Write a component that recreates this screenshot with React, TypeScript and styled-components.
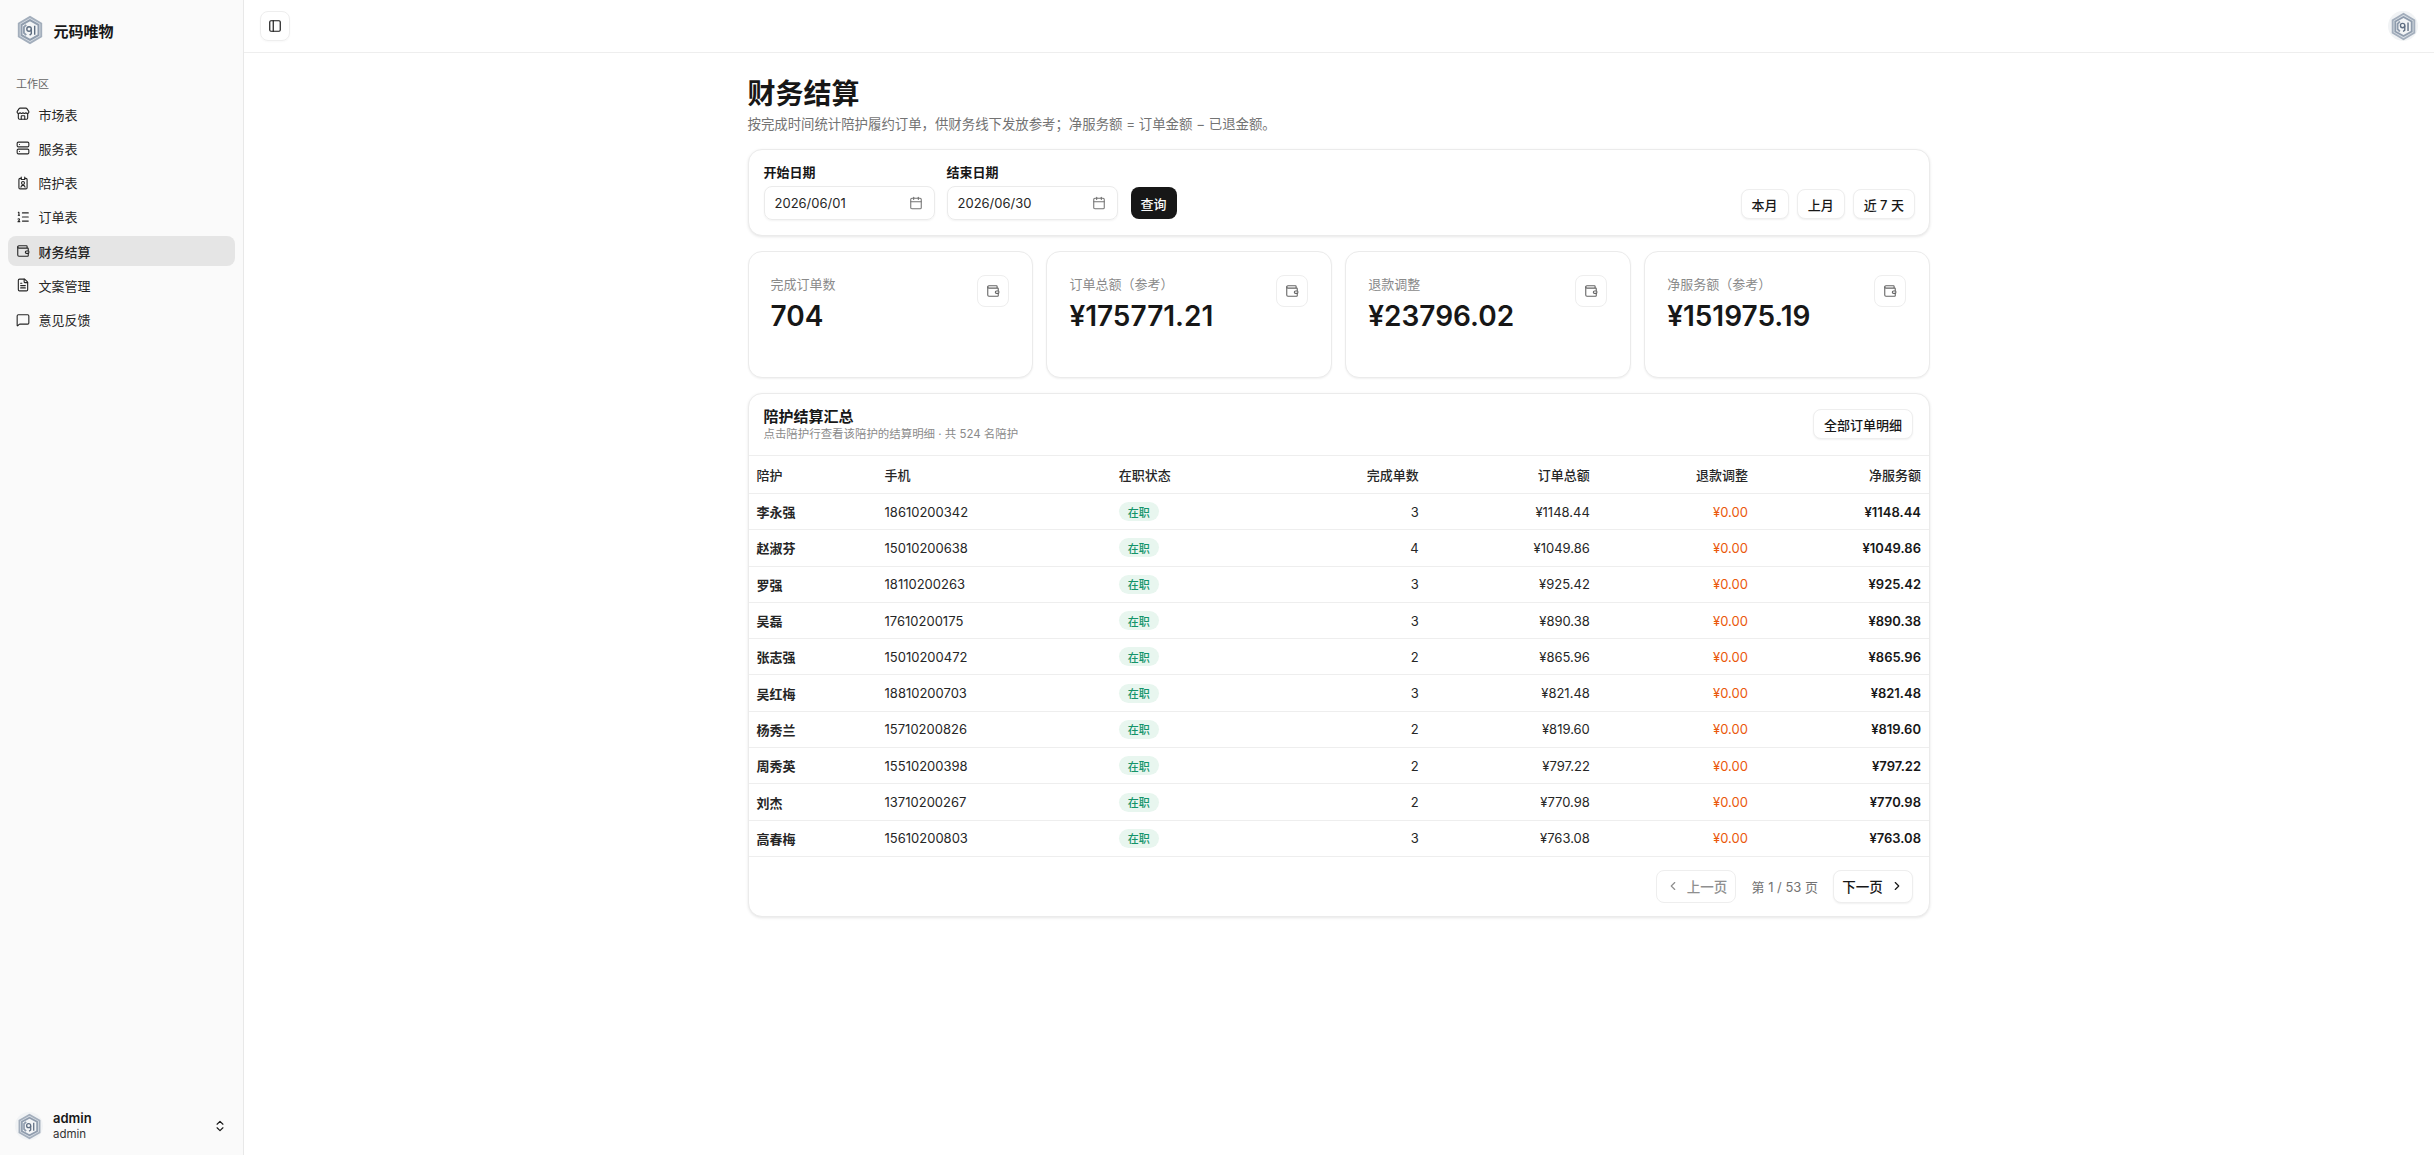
import React from 'react';
import styled, { createGlobalStyle } from 'styled-components';
import {
  Calendar,
  ChevronLeft,
  ChevronRight,
  ChevronsUpDown,
  FileText,
  ListOrdered,
  MessageSquare,
  PanelLeft,
  Server,
  Store,
  Wallet,
} from 'lucide-react';

const GlobalStyle = createGlobalStyle`
  html, body, #root { margin: 0; padding: 0; height: 100%; }
  body {
    background: #fff;
    color: #171717;
    font-family: Inter, "Noto Sans CJK SC", sans-serif;
    -webkit-font-smoothing: antialiased;
  }
  * { box-sizing: border-box; }
`;

const Layout = styled.div`
  display: flex;
  height: 1155px;
  overflow: hidden;
`;

const Sidebar = styled.aside`
  width: 244px;
  flex: none;
  display: flex;
  flex-direction: column;
  background: #fafafa;
  border-right: 1px solid #e8e8e8;
`;

const Brand = styled.div`
  height: 60px;
  display: flex;
  align-items: center;
  gap: 8.5px;
  padding: 0 0 0 15px;
  font-size: 15px;
  font-weight: 600;
`;

const GroupLabel = styled.div`
  margin: 14px 0 0 16px;
  height: 20px;
  line-height: 20px;
  font-size: 11px;
  color: #666;
`;

const Nav = styled.nav`
  display: flex;
  flex-direction: column;
  gap: 4.3px;
  padding: 0 8px;
  margin-top: 5px;
`;

const NavItem = styled.div<{ $active?: boolean }>`
  height: 30px;
  display: flex;
  align-items: center;
  gap: 8.5px;
  padding-left: 8px;
  border-radius: 8px;
  font-size: 13px;
  color: #262626;
  background: ${(p) => (p.$active ? '#e5e5e5' : 'transparent')};
  font-weight: ${(p) => (p.$active ? 500 : 400)};

  svg { width: 14px; height: 14px; flex: none; stroke-width: 1.9; }
`;

const UserRow = styled.div`
  margin-top: auto;
  height: 60px;
  display: flex;
  align-items: center;
  padding: 2px 16px 0 15px;
  gap: 10px;
`;

const UserAvatar = styled.div<{ $size: number }>`
  width: ${(p) => p.$size}px;
  height: ${(p) => p.$size}px;
  flex: none;
  border-radius: 50%;
  background: #f1f3f5;
  display: flex;
  align-items: center;
  justify-content: center;
`;

const UserText = styled.div`
  flex: 1;
  display: flex;
  flex-direction: column;
  font-size: 13px;
  line-height: 16px;
  font-weight: 600;

  span { font-size: 11.5px; font-weight: 400; color: #333; }
`;

const Main = styled.div`
  flex: 1;
  display: flex;
  flex-direction: column;
  min-width: 0;
`;

const Topbar = styled.header`
  height: 53px;
  flex: none;
  display: flex;
  align-items: center;
  justify-content: space-between;
  padding: 0 16px;
  border-bottom: 1px solid #eee;
`;

const IconButton = styled.div`
  width: 30px;
  height: 30px;
  display: flex;
  align-items: center;
  justify-content: center;
  border: 1px solid #eee;
  border-radius: 8px;
  box-shadow: 0 1px 2px rgba(0, 0, 0, 0.03);

  svg { width: 14px; height: 14px; stroke-width: 2; }
`;

const Content = styled.main`
  width: 1182.5px;
  margin: 0 0 0 503.5px;
  padding-top: 20px;
`;

const Title = styled.h1`
  margin: 0;
  font-size: 28px;
  line-height: 42px;
  font-weight: 700;
  letter-spacing: 0;
`;

const Subtitle = styled.p`
  margin: 0;
  font-size: 13.4px;
  line-height: 18px;
  color: #737373;
`;

const Card = styled.section`
  background: #fff;
  border: 1px solid #ebebeb;
  border-radius: 14px;
  box-shadow: 0 1px 3px rgba(0, 0, 0, 0.1);
`;

const FilterCard = styled(Card)`
  margin-top: 16px;
  height: 87px;
  padding: 14px 15px 15px;
  display: flex;
  align-items: flex-end;
  justify-content: space-between;
`;

const FilterFields = styled.div`
  display: flex;
  align-items: flex-end;
  gap: 12px;
`;

const Field = styled.label`
  display: flex;
  flex-direction: column;
  gap: 5px;
  font-size: 13px;
  line-height: 18px;
  font-weight: 600;
`;

const DateInput = styled.div`
  width: 171px;
  height: 34px;
  display: flex;
  align-items: center;
  justify-content: space-between;
  padding: 0 11px 0 10px;
  border: 1px solid #ebebeb;
  border-radius: 8px;
  box-shadow: 0 1px 2px rgba(0, 0, 0, 0.05);
  font-size: 13px;
  font-weight: 400;
  color: #262626;

  svg { width: 14px; height: 14px; color: #737373; stroke-width: 1.8; }
`;

const SearchButton = styled.div`
  width: 46px;
  height: 32px;
  margin: 0 0 1px 1px;
  display: flex;
  align-items: center;
  justify-content: center;
  background: #171717;
  color: #fafafa;
  border-radius: 8px;
  font-size: 13px;
  font-weight: 500;
`;

const QuickRange = styled.div`
  display: flex;
  gap: 8px;
  margin: 0 -1px 1px 0;
`;

const Button = styled.div<{ $disabled?: boolean }>`
  height: 30px;
  display: inline-flex;
  align-items: center;
  justify-content: center;
  gap: 8px;
  padding: 0 10px;
  background: #fff;
  border: 1px solid #eee;
  border-radius: 8px;
  box-shadow: ${(p) => (p.$disabled ? 'none' : '0 1px 2px rgba(0, 0, 0, 0.06)')};
  font-size: 13px;
  font-weight: 500;
  color: ${(p) => (p.$disabled ? '#8f8f8f' : '#171717')};
  white-space: nowrap;

  svg { width: 14px; height: 14px; }
`;

const Stats = styled.div`
  display: grid;
  grid-template-columns: repeat(4, 1fr);
  gap: 13px;
  margin-top: 15px;
`;

const StatCard = styled(Card)`
  height: 127px;
  display: flex;
  align-items: flex-start;
  justify-content: space-between;
  padding: 22px 23px 0 22px;
  box-shadow: 0 1px 2px rgba(0, 0, 0, 0.06);
`;

const StatLabel = styled.div`
  font-size: 13px;
  line-height: 20px;
  color: #8a8a8a;
`;

const StatValue = styled.div`
  margin-top: 3px;
  font-size: 28px;
  line-height: 38px;
  font-weight: 600;
  color: #171717;
`;

const StatIcon = styled.div`
  width: 32px;
  height: 32px;
  margin-top: 1px;
  display: flex;
  align-items: center;
  justify-content: center;
  border: 1px solid #eee;
  border-radius: 8px;
  color: #666;

  svg { width: 14px; height: 14px; stroke-width: 1.9; }
`;

const TableCard = styled(Card)`
  margin-top: 15px;
  height: 524px;
  display: flex;
  flex-direction: column;
`;

const TableHeader = styled.div`
  height: 61px;
  flex: none;
  display: flex;
  align-items: center;
  justify-content: space-between;
  padding: 0 16px 1px 15px;
`;

const TableTitle = styled.div`
  font-size: 15px;
  line-height: 21px;
  font-weight: 600;
`;

const TableHint = styled.div`
  font-size: 11.45px;
  line-height: 15px;
  color: #8a8a8a;
`;

const Table = styled.table`
  width: 100%;
  table-layout: fixed;
  border-collapse: collapse;
  font-size: 13px;
`;

const Th = styled.th<{ $right?: boolean }>`
  height: 38px;
  padding: 0 8px;
  border-top: 1px solid #eee;
  border-bottom: 1px solid #eee;
  text-align: ${(p) => (p.$right ? 'right' : 'left')};
  font-weight: 500;
  color: #262626;
`;

const Td = styled.td<{ $right?: boolean; $bold?: boolean; $tone?: string }>`
  height: 36.3px;
  padding: 0 8px;
  border-bottom: 1px solid #eee;
  text-align: ${(p) => (p.$right ? 'right' : 'left')};
  font-weight: ${(p) => (p.$bold ? 600 : 400)};
  color: ${(p) => p.$tone || '#262626'};
`;

const Badge = styled.span`
  display: inline-flex;
  align-items: center;
  justify-content: center;
  width: 40px;
  height: 19px;
  border-radius: 999px;
  background: #e8f6ef;
  color: #14946a;
  font-size: 11px;
  font-weight: 500;
  vertical-align: middle;
`;

const Pager = styled.div`
  flex: 1;
  display: flex;
  align-items: center;
  justify-content: flex-end;
  gap: 15px;
  padding: 0 16px 0 0;
`;

const PagerButton = styled(Button)`
  height: 33px;
  width: 80px;
  padding: 0;
  gap: 7px;
  font-size: 13.5px;
`;

const PagerText = styled.span`
  font-size: 13px;
  color: #737373;
`;

const widths = [128, 234, 200, 116, 171, 158, 173];

const rows = [
  ['李永强', '18610200342', 3, '¥1148.44'],
  ['赵淑芬', '15010200638', 4, '¥1049.86'],
  ['罗强', '18110200263', 3, '¥925.42'],
  ['吴磊', '17610200175', 3, '¥890.38'],
  ['张志强', '15010200472', 2, '¥865.96'],
  ['吴红梅', '18810200703', 3, '¥821.48'],
  ['杨秀兰', '15710200826', 2, '¥819.60'],
  ['周秀英', '15510200398', 2, '¥797.22'],
  ['刘杰', '13710200267', 2, '¥770.98'],
  ['高春梅', '15610200803', 3, '¥763.08'],
];

const stats = [
  ['完成订单数', '704'],
  ['订单总额（参考）', '¥175771.21'],
  ['退款调整', '¥23796.02'],
  ['净服务额（参考）', '¥151975.19'],
];

// id badge with a clip on top, the one lucide has is horizontal
function StaffBadge() {
  return (
    <svg viewBox="0 0 24 24" fill="none" stroke="currentColor" strokeLinecap="round" strokeLinejoin="round">
      <path d="M9 4H7a2 2 0 0 0-2 2v14a2 2 0 0 0 2 2h10a2 2 0 0 0 2-2V6a2 2 0 0 0-2-2h-2" />
      <path d="M9 2v4h6V2" />
      <circle cx="12" cy="12" r="2.5" />
      <path d="M8.500 19c.4-2 1.700-3 3.500-3s3.100 1 3.500 3" />
    </svg>
  );
}

const navItems = [
  { label: '市场表', icon: <Store /> },
  { label: '服务表', icon: <Server /> },
  { label: '陪护表', icon: <StaffBadge /> },
  { label: '订单表', icon: <ListOrdered /> },
  { label: '财务结算', icon: <Wallet />, active: true },
  { label: '文案管理', icon: <FileText /> },
  { label: '意见反馈', icon: <MessageSquare /> },
];

function Logo({ size }: { size: number }) {
  return (
    <svg width={size} height={size} viewBox="0 0 32 32" fill="none">
      <path d="M16 2 28 9v14l-12 7-12-7V9z" fill="#d8dee5" stroke="#a3aebc" strokeWidth="2" />
      <path d="M16 5.500 25 10.500v11L16 26.500 7 21.500v-11z" fill="#f2f4f6" stroke="#8f9cad" strokeWidth="2" />
      <path d="M12 10.500 9.500 13v6l2.500 2.500" stroke="#8f9cad" strokeWidth="2" />
      <circle cx="15" cy="15" r="2.400" stroke="#5f6e82" strokeWidth="1.500" />
      <path d="M17.400 15v5l-1.800 1.500M21 11.500V21" stroke="#5f6e82" strokeWidth="1.500" />
    </svg>
  );
}

export default function App() {
  return (
    <>
      <GlobalStyle />
      <Layout>
        <Sidebar>
          <Brand>
            <Logo size={30} />
            元码唯物
          </Brand>
          <GroupLabel>工作区</GroupLabel>
          <Nav>
            {navItems.map((item) => (
              <NavItem key={item.label} $active={item.active}>
                {item.icon}
                {item.label}
              </NavItem>
            ))}
          </Nav>
          <UserRow>
            <UserAvatar $size={28}>
              <Logo size={27} />
            </UserAvatar>
            <UserText>
              admin
              <span>admin</span>
            </UserText>
            <ChevronsUpDown size={14} />
          </UserRow>
        </Sidebar>
        <Main>
          <Topbar>
            <IconButton>
              <PanelLeft />
            </IconButton>
            <UserAvatar $size={30}>
              <Logo size={29} />
            </UserAvatar>
          </Topbar>
          <Content>
            <Title>财务结算</Title>
            <Subtitle>按完成时间统计陪护履约订单，供财务线下发放参考；净服务额 = 订单金额 − 已退金额。</Subtitle>
            <FilterCard>
              <FilterFields>
                <Field>
                  开始日期
                  <DateInput>
                    2026/06/01
                    <Calendar />
                  </DateInput>
                </Field>
                <Field>
                  结束日期
                  <DateInput>
                    2026/06/30
                    <Calendar />
                  </DateInput>
                </Field>
                <SearchButton>查询</SearchButton>
              </FilterFields>
              <QuickRange>
                <Button>本月</Button>
                <Button>上月</Button>
                <Button>近 7 天</Button>
              </QuickRange>
            </FilterCard>
            <Stats>
              {stats.map(([label, value]) => (
                <StatCard key={label}>
                  <div>
                    <StatLabel>{label}</StatLabel>
                    <StatValue>{value}</StatValue>
                  </div>
                  <StatIcon>
                    <Wallet />
                  </StatIcon>
                </StatCard>
              ))}
            </Stats>
            <TableCard>
              <TableHeader>
                <div>
                  <TableTitle>陪护结算汇总</TableTitle>
                  <TableHint>点击陪护行查看该陪护的结算明细 · 共 524 名陪护</TableHint>
                </div>
                <Button>全部订单明细</Button>
              </TableHeader>
              <Table>
                <colgroup>
                  {widths.map((w, i) => (
                    <col key={i} width={w} />
                  ))}
                </colgroup>
                <thead>
                  <tr>
                    <Th>陪护</Th>
                    <Th>手机</Th>
                    <Th>在职状态</Th>
                    <Th $right>完成单数</Th>
                    <Th $right>订单总额</Th>
                    <Th $right>退款调整</Th>
                    <Th $right>净服务额</Th>
                  </tr>
                </thead>
                <tbody>
                  {rows.map(([name, phone, count, amount]) => (
                    <tr key={phone}>
                      <Td $bold>{name}</Td>
                      <Td>{phone}</Td>
                      <Td>
                        <Badge>在职</Badge>
                      </Td>
                      <Td $right>{count}</Td>
                      <Td $right>{amount}</Td>
                      <Td $right $tone="#ea580c">¥0.00</Td>
                      <Td $right $bold $tone="#171717">{amount}</Td>
                    </tr>
                  ))}
                </tbody>
              </Table>
              <Pager>
                <PagerButton $disabled>
                  <ChevronLeft />
                  上一页
                </PagerButton>
                <PagerText>第 1 / 53 页</PagerText>
                <PagerButton>
                  下一页
                  <ChevronRight />
                </PagerButton>
              </Pager>
            </TableCard>
          </Content>
        </Main>
      </Layout>
    </>
  );
}
